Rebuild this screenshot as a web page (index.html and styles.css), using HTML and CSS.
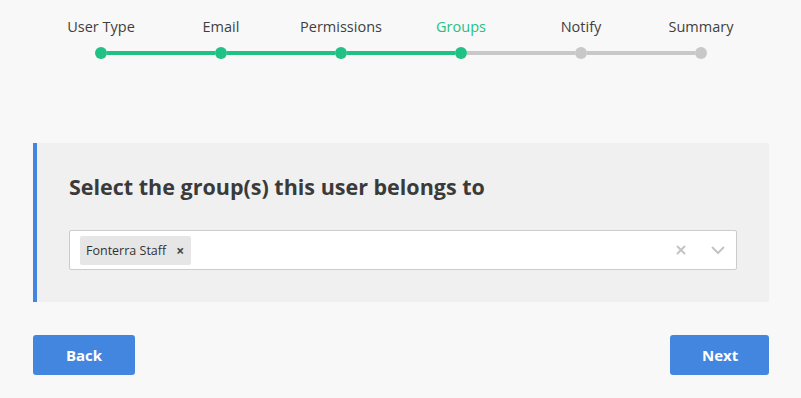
FILE: index.html
```html
<!DOCTYPE html>
<html lang="en">
<head>
    <meta charset="UTF-8">
    <title>Add User - Groups</title>
    <link rel="stylesheet" href="styles.css">
</head>
<body>
    <div class="wizard">
        <div class="stepper">
            <div class="step-labels">
                <span class="step-label">User Type</span>
                <span class="step-label">Email</span>
                <span class="step-label">Permissions</span>
                <span class="step-label active">Groups</span>
                <span class="step-label">Notify</span>
                <span class="step-label">Summary</span>
            </div>
            <div class="step-track">
                <span class="dot done"></span>
                <span class="seg done"></span>
                <span class="dot done"></span>
                <span class="seg done"></span>
                <span class="dot done"></span>
                <span class="seg done"></span>
                <span class="dot done"></span>
                <span class="seg"></span>
                <span class="dot"></span>
                <span class="seg"></span>
                <span class="dot"></span>
            </div>
        </div>

        <div class="question-card">
            <h2>Select the group(s) this user belongs to</h2>
            <div class="multi-select">
                <div class="select-values">
                    <span class="tag">Fonterra Staff <span class="tag-remove">&times;</span></span>
                </div>
                <div class="select-indicators">
                    <svg class="ind" width="14" height="14" viewBox="0 0 14 14">
                        <path d="M3 3 L11 11 M11 3 L3 11" stroke="#c4c4c4" stroke-width="2" fill="none"/>
                    </svg>
                    <svg class="ind" width="16" height="14" viewBox="0 0 16 14">
                        <path d="M2 4 L8 10 L14 4" stroke="#c4c4c4" stroke-width="2" fill="none"/>
                    </svg>
                </div>
            </div>
        </div>

        <div class="button-row">
            <button class="btn">Back</button>
            <button class="btn">Next</button>
        </div>
    </div>
</body>
</html>
```

FILE: styles.css
```css
body {
    margin: 0;
    padding: 0;
    background: #f8f8f8;
    font-family: 'Open Sans', 'Noto Sans', sans-serif;
    color: #3c3c3c;
}

.wizard {
    width: 736px;
    margin: 0 auto;
    padding-top: 16px;
    padding-left: 1px;
}

.stepper {
    width: 720px;
    margin: 0 auto;
}

.step-labels {
    display: grid;
    grid-template-columns: repeat(6, 120px);
}

.step-label {
    text-align: center;
    font-size: 14.5px;
    line-height: 22px;
    color: #3f3f3f;
}

.step-label.active {
    color: #1fc185;
}

.step-track {
    display: flex;
    align-items: center;
    padding: 0 54px;
    margin-top: 9px;
}

.dot {
    width: 12px;
    height: 12px;
    border-radius: 50%;
    background: #c8c8c8;
    flex: none;
}

.seg {
    width: 108px;
    height: 4px;
    background: #c8c8c8;
    flex: none;
}

.dot.done,
.seg.done {
    background: #1fc185;
}

.question-card {
    margin-top: 84px;
    background: #f0f0f0;
    border-left: 4px solid #4386df;
    padding: 29px 32px 32px 32px;
}

.question-card h2 {
    margin: 0 0 28px;
    font-size: 21.5px;
    line-height: 30px;
    font-weight: 700;
    color: #3a3a3a;
}

.multi-select {
    display: flex;
    align-items: center;
    height: 38px;
    background: #fff;
    border: 1px solid #cccccc;
    border-radius: 2px;
}

.select-values {
    flex: 1;
    padding-left: 10px;
}

.tag {
    display: inline-flex;
    align-items: center;
    height: 29px;
    padding: 0 7px 0 6px;
    background: #e6e6e6;
    border-radius: 2px;
    font-size: 12.5px;
    color: #333;
}

.tag-remove {
    margin-left: 10px;
    font-size: 14px;
    font-weight: 700;
    color: #444;
}

.select-indicators {
    display: flex;
    align-items: center;
    gap: 22px;
    padding-right: 10px;
}

.button-row {
    display: flex;
    justify-content: space-between;
    margin-top: 33px;
}

.btn {
    height: 40px;
    padding: 0 32px;
    border: none;
    border-radius: 3px;
    background: #4386df;
    color: #fff;
    font-family: inherit;
    font-size: 15px;
    font-weight: 700;
    cursor: pointer;
}

.btn:first-child {
    width: 102px;
}

.btn:last-child {
    width: 99px;
}
```
